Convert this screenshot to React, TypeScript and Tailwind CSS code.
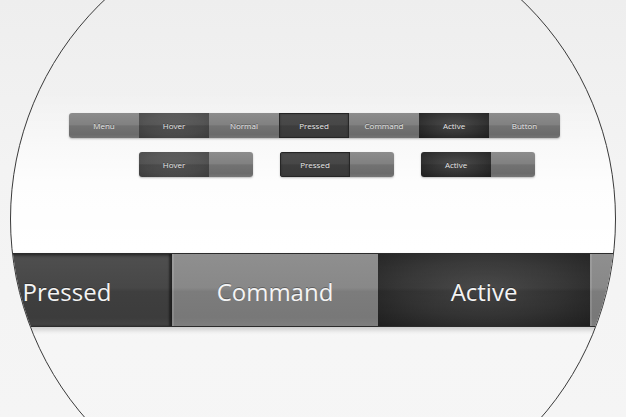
import React from "react";

type Tone = "mid" | "hover" | "pressed" | "active";

const smallTone: Record<Tone, string> = {
  mid: "bg-[linear-gradient(to_bottom,#8c8c8c_0%,#818181_46%,#727272_52%,#6b6b6b_86%,#757575_100%)]",
  hover:
    "bg-[image:linear-gradient(to_bottom,rgba(255,255,255,0.08)_0%,rgba(255,255,255,0.03)_46%,rgba(0,0,0,0.1)_52%,rgba(0,0,0,0.05)_100%),radial-gradient(ellipse_at_center,#585858_0%,#4e4e4e_60%,#3f3f3f_100%)]",
  pressed:
    "bg-[linear-gradient(to_bottom,#4c4c4c_0%,#474747_46%,#3d3d3d_52%,#3a3a3a_86%,#404040_100%)] shadow-[inset_0_0_0_1px_#262626,inset_0_0_3px_rgba(0,0,0,0.6)]",
  active:
    "bg-[image:linear-gradient(to_bottom,rgba(255,255,255,0.05)_0%,rgba(255,255,255,0.02)_46%,rgba(0,0,0,0.08)_52%,rgba(0,0,0,0)_100%),radial-gradient(ellipse_at_center,#4a4a4a_0%,#303030_60%,#1d1d1d_100%)]",
};

const bigTone: Record<Tone, string> = {
  mid: "bg-[linear-gradient(to_bottom,#8f8f8f_0%,#888888_47%,#7c7c7c_52%,#787878_88%,#7f7f7f_100%)] shadow-[inset_2px_0_0_rgba(255,255,255,0.12)]",
  hover: "bg-[linear-gradient(to_bottom,#5e5e5e,#444)]",
  pressed:
    "bg-[linear-gradient(to_bottom,#4f4f4f_0%,#474747_47%,#3f3f3f_52%,#3c3c3c_88%,#434343_100%)] shadow-[inset_-3px_0_2px_rgba(0,0,0,0.45),inset_0_2px_3px_rgba(0,0,0,0.35)]",
  active:
    "bg-[image:linear-gradient(to_bottom,rgba(255,255,255,0.04)_0%,rgba(255,255,255,0.02)_47%,rgba(0,0,0,0.07)_52%,rgba(0,0,0,0)_100%),radial-gradient(ellipse_at_center,#474747_0%,#333_55%,#1e1e1e_100%)]",
};

const font = "font-['Open_Sans','Noto_Sans',sans-serif]";

function SmallSeg({ label, tone, w = "w-[70px]" }: { label?: string; tone: Tone; w?: string }) {
  return (
    <div
      className={`${w} h-full flex items-center justify-center text-[8px] text-[#e6e6e6] [text-shadow:0_-1px_0_rgba(0,0,0,0.35)] ${smallTone[tone]}`}
    >
      {label}
    </div>
  );
}

function BigSeg({ label, tone, w }: { label?: string; tone: Tone; w: string }) {
  return (
    <div
      className={`${w} h-full shrink-0 flex items-center justify-center pt-[3px] text-[24px] text-[#f4f4f4] [text-shadow:0_-1px_0_rgba(0,0,0,0.3)] ${bigTone[tone]}`}
    >
      {label}
    </div>
  );
}

const topRow: { label: string; tone: Tone }[] = [
  { label: "Menu", tone: "mid" },
  { label: "Hover", tone: "hover" },
  { label: "Normal", tone: "mid" },
  { label: "Pressed", tone: "pressed" },
  { label: "Command", tone: "mid" },
  { label: "Active", tone: "active" },
  { label: "Button", tone: "mid" },
];

const pairs: { label: string; tone: Tone }[] = [
  { label: "Hover", tone: "hover" },
  { label: "Pressed", tone: "pressed" },
  { label: "Active", tone: "active" },
];

export default function App() {
  return (
    <div
      className={`relative w-[626px] h-[417px] overflow-hidden bg-[linear-gradient(to_bottom,#eeeeee,#f3f3f3_40%,#f5f5f5)] ${font}`}
    >
      {/* magnifier lens with the enlarged bar */}
      <div className="absolute left-[10px] top-[-84px] w-[606px] h-[606px] rounded-full border border-[#3a3a3a] overflow-hidden bg-[linear-gradient(to_bottom,rgba(255,255,255,0)_29%,rgba(255,255,255,0.85)_44%,#ffffff_55%,#f6f6f6_70%,#f5f5f5_100%)]">
        <div className="mt-[336px] ml-[-49px] flex h-[74px] border-y border-[#2c2c2c] shadow-[0_3px_5px_rgba(0,0,0,0.18)]">
          <BigSeg label="Pressed" tone="pressed" w="w-[210px]" />
          <BigSeg label="Command" tone="mid" w="w-[206px]" />
          <BigSeg label="Active" tone="active" w="w-[212px]" />
          <BigSeg tone="mid" w="w-[60px]" />
        </div>
      </div>

      {/* small button strips */}
      <div className="relative pt-[113px] pl-[69px]">
        <div className="flex h-[25px] w-[491px] rounded-[3px] overflow-hidden shadow-[0_1px_2px_rgba(0,0,0,0.25)]">
          {topRow.map((s) => (
            <SmallSeg key={s.label} label={s.label} tone={s.tone} w={s.label === "Button" ? "w-[71px]" : "w-[70px]"} />
          ))}
        </div>
        <div className="mt-[14px] ml-[70px] flex gap-[27px]">
          {pairs.map((p) => (
            <div
              key={p.label}
              className="flex h-[25px] w-[114px] rounded-[3px] overflow-hidden shadow-[0_1px_2px_rgba(0,0,0,0.25)]"
            >
              <SmallSeg label={p.label} tone={p.tone} />
              <SmallSeg tone="mid" w="w-[44px]" />
            </div>
          ))}
        </div>
      </div>
    </div>
  );
}
